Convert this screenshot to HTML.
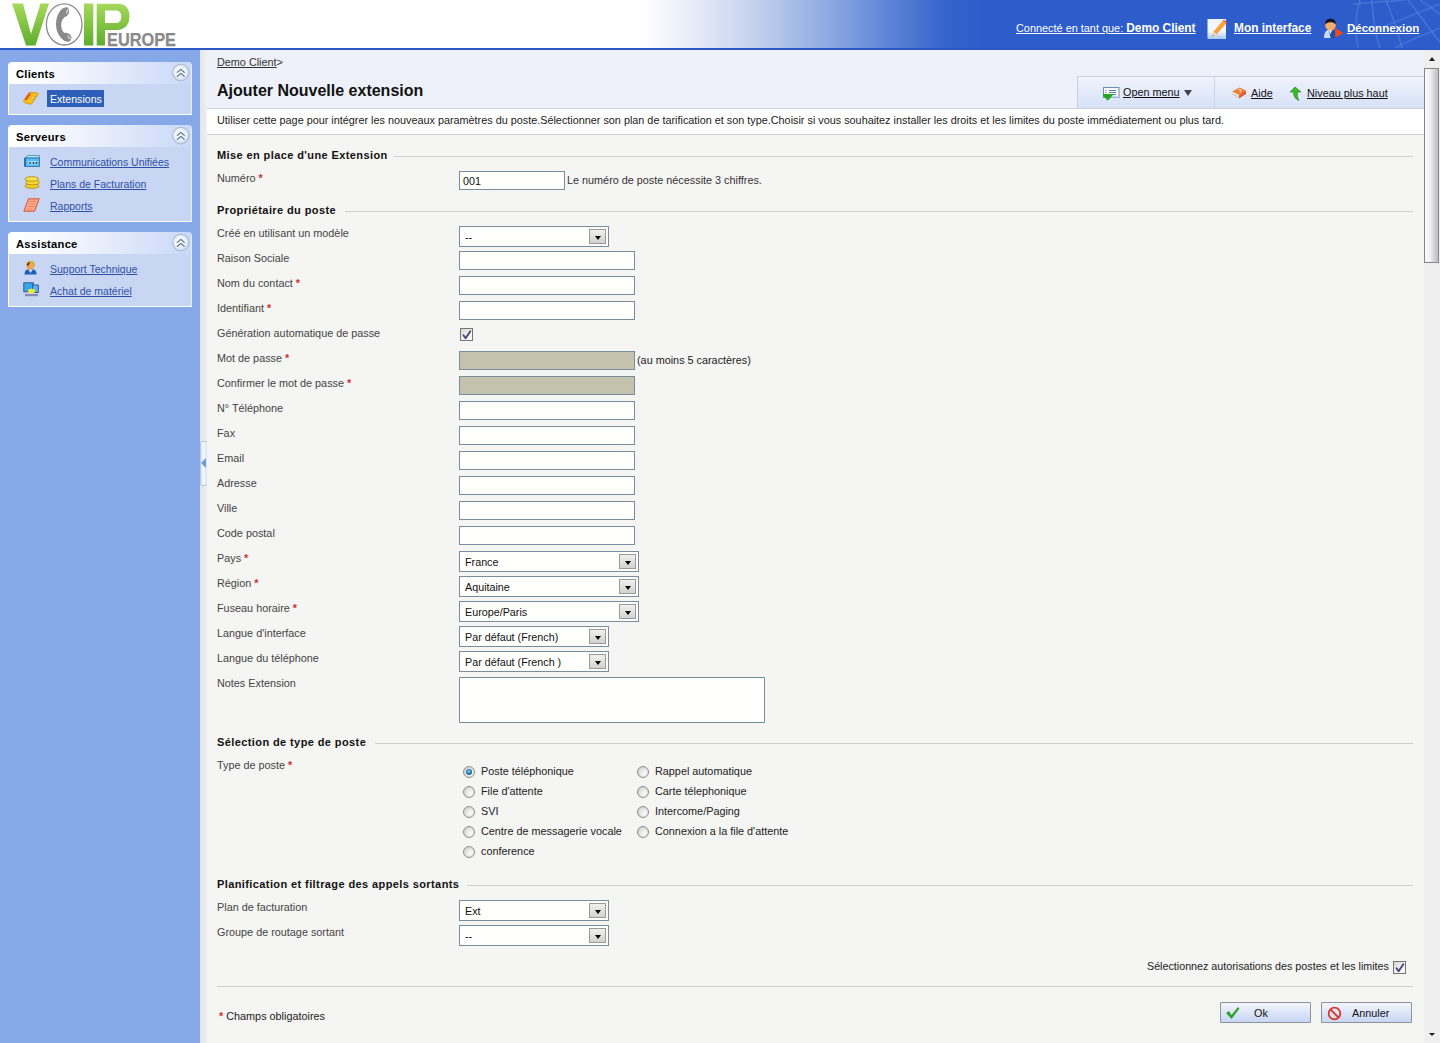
<!DOCTYPE html>
<html><head><meta charset="utf-8">
<style>
*{box-sizing:border-box}
html,body{margin:0;padding:0;width:1440px;height:1043px;overflow:hidden;font-family:"Liberation Sans",sans-serif;font-size:11px;color:#333;position:relative}
.abs{position:absolute}
#hdr{position:absolute;left:0;top:0;width:1440px;height:48px;background:linear-gradient(to right,#fff 0,#fff 643px,#e3e9f7 700px,#c3d1ee 755px,#8eaae2 828px,#5a82d6 892px,#3564cb 945px,#2c5dca 985px,#2c5dca 1440px)}
#hline{position:absolute;left:0;top:48px;width:1440px;height:2px;background:#2c58c9}
#side{position:absolute;left:0;top:50px;width:200px;height:993px;background:#87a8e8}
#split{position:absolute;left:200px;top:50px;width:7px;height:993px;background:linear-gradient(to right,#e3e6ea,#e9ebee 5px,#f2f2f1)}
#main{position:absolute;left:207px;top:50px;width:1217px;height:993px;background:#f5f5f3}
#scroll{position:absolute;left:1424px;top:50px;width:16px;height:993px;background:#efefef}
.t{white-space:nowrap;font-size:10.84px;line-height:13px}
.panel{position:absolute;left:8px;width:184px;background:#c8d6f4;border-left:1px solid #fff;border-bottom:1px solid #fff;border-right:1px solid #e6ecfa;border-radius:4px 4px 0 0}
.ph{position:absolute;left:0;top:0;width:100%;height:22px;background:linear-gradient(to right,#fff 0,#f2f5fd 60px,#c9d9f8 100%);border-radius:4px 4px 0 0;font-weight:bold;color:#000;font-size:11.2px;letter-spacing:0.25px;line-height:13px;padding:6px 0 0 7px}
.chev{position:absolute;right:3px;top:3px;width:17px;height:17px;border-radius:50%;background:radial-gradient(circle at 50% 40%,#fff,#dbe6f8 70%,#b9cdef);border:1px solid #c3d2ee}
.lnk{position:absolute;left:41px;color:#2d50a6;text-decoration:underline;font-size:10.5px;line-height:13px;white-space:nowrap;margin-top:1px}
.ico{position:absolute;left:14px}
.lbl{left:217px;white-space:nowrap;font-size:10.84px;line-height:13px;color:#444}
.req{color:#d03030;font-weight:bold}
.sec{left:217px;white-space:nowrap;font-size:11px;letter-spacing:0.4px;line-height:13px;font-weight:bold;color:#111}
.secl{height:1px;background:#cfcfcd}
.inp{left:459px;height:19px;border:1px solid #7a8d9f;background:#fffffe}
.iv{position:absolute;left:3px;top:3px;font-size:10.75px;line-height:13px;color:#111}
.sel{left:459px;height:21px;border:1px solid #7a8d9f;background:#fffffe}
.sv{position:absolute;left:5px;top:4px;font-size:10.75px;line-height:13px;color:#111;white-space:nowrap}
.dd{position:absolute;right:2px;top:2px;width:17px;height:15px;border:1px solid #9a9a9a;background:linear-gradient(#f0f0ee,#d2d2d0)}
.dd:after{content:"";position:absolute;left:4.5px;top:6px;border-left:3.5px solid transparent;border-right:3.5px solid transparent;border-top:4px solid #000}
.cb{width:13px;height:13px;border:1px solid #747474;background:linear-gradient(135deg,#d6d6d0,#f3f3f1 60%,#fafaf9)}

.rd{width:12px;height:12px;border-radius:50%;border:1px solid #8e8e8c;background:radial-gradient(circle at 65% 65%,#fbfbfa,#e6e6e2 45%,#c4c4c0)}
.rd.on:after{content:"";position:absolute;left:2px;top:2px;width:6px;height:6px;border-radius:50%;background:radial-gradient(circle at 45% 40%,#8fdcf5,#2a7ab0 45%,#123e6a)}
.btn{width:91px;height:21px;border:1px solid #8e9299;border-radius:1px;background:linear-gradient(#f2f5fc,#c8d6f4)}
</style></head><body>
<div id="split"></div>
<div id="main"></div>
<div id="scroll"></div>
<!-- HEADER -->
<div id="hdr">
 <svg class="abs" style="left:1320px;top:0" width="120" height="48" viewBox="0 0 120 48">
  <g fill="none" stroke="#5482dc" stroke-opacity="0.55" stroke-width="1.8">
   <path d="M40 0 C35 15, 35 35, 38 48"/>
   <path d="M52 0 C53 18, 55 35, 60 48"/>
   <path d="M66 0 C72 15, 78 32, 82 48"/>
   <path d="M88 0 C98 12, 108 28, 120 42"/>
   <path d="M33 4 C50 3, 70 1, 85 0"/>
   <path d="M55 30 C75 22, 100 12, 120 4"/>
   <path d="M75 48 C90 40, 105 34, 120 28"/>
   <path d="M100 0 L 120 14"/>
  </g>
 </svg>
 <div class="abs" style="left:1016px;top:22px;color:#fff;font-size:10.9px;line-height:13px;white-space:nowrap;text-decoration:underline">Connecté en tant que: <b style="font-size:11.9px">Demo Client</b></div>
 <svg class="abs" style="left:1207px;top:19px" width="20" height="21" viewBox="0 0 20 21"><defs><linearGradient id="pg" x1="0" y1="0" x2="0" y2="1"><stop offset="0" stop-color="#eef5fe"/><stop offset="0.6" stop-color="#f4f8fd"/><stop offset="1" stop-color="#a9c9f2"/></linearGradient></defs><rect x="0.5" y="0" width="18.5" height="20" fill="url(#pg)"/><path d="M5.5 17 L6.5 12.5 L15.5 2 L19 4.8 L10 15 Z" fill="#f6a43a"/><path d="M15.5 2 L17 0.5 L19.8 3 L19 4.8 Z" fill="#e8703a"/><path d="M6.5 12.5 L10 15 L5.5 17 Z" fill="#f3d9b0"/><path d="M5.5 17 L6.2 15.8 L6.8 16.4 Z" fill="#333"/></svg>
 <div class="abs" style="left:1234px;top:22px;color:#fff;font-weight:bold;font-size:11.9px;line-height:13px;white-space:nowrap;text-decoration:underline">Mon interface</div>
 <svg class="abs" style="left:1322px;top:18px" width="22" height="21" viewBox="0 0 22 21"><path d="M2 20 C2 14.5 4 12 8.5 12 C13 12 15 14.5 15 20 Z" fill="#1d4fae"/><path d="M2 20 C2 14.5 4 12 7 12 L8.5 20 Z" fill="#c8dcf8"/><path d="M7 12 L8.5 16 L10 12 Z" fill="#fff"/><circle cx="8.5" cy="7.2" r="5.3" fill="#f2ad6a"/><path d="M3.2 6.5 C3 2.5 5.5 0.8 8.5 0.8 C11.5 0.8 14 2.5 13.8 6.5 C12.5 4.6 10.5 4.2 8.5 4.2 C6.5 4.2 4.5 4.6 3.2 6.5 Z" fill="#15151f"/><path d="M13.2 10 L21.5 15 L13.2 19.8 Z" fill="#f04a1e"/></svg>
 <div class="abs" style="left:1347px;top:22px;color:#fff;font-weight:bold;font-size:11.5px;line-height:13px;white-space:nowrap;text-decoration:underline">Déconnexion</div>
 <!-- LOGO -->
 <svg class="abs" style="left:0;top:0" width="190" height="48" viewBox="0 0 190 48">
  <defs>
   <linearGradient id="lg" x1="0" y1="0" x2="0" y2="1">
    <stop offset="0" stop-color="#a6d85a"/><stop offset="1" stop-color="#5fae2e"/>
   </linearGradient>
  </defs>
  <path d="M12 3.5 L23 3.5 L31 34 L40.5 3.5 L49 3.5 L35.5 45.5 L26 45.5 Z" fill="url(#lg)"/>
  <ellipse cx="64.2" cy="24.4" rx="17.8" ry="20.6" fill="none" stroke="#8c8c8c" stroke-width="1.3"/>
  <path d="M67 7.2 C68.8 7.5 69.5 10 69 12.5 C68.5 15 66.5 16.8 64.8 17 C62.3 19 61 22 61.2 25.5 C61.4 29 62.5 31.5 64.5 33 C66.5 32.5 69 33.2 70.8 35.5 C72 37.5 71.5 40.5 69.5 41.5 C67 42.5 64 41 61.5 38.5 C58 35 56 30 56 24.5 C56 18 58.5 12 62 9 C63.5 7.8 65.5 7 67 7.2 Z" fill="#8a8a8a"/><ellipse cx="67.3" cy="11" rx="1" ry="3" fill="#c9c9c9" transform="rotate(20 67.3 11)"/><ellipse cx="69" cy="37.5" rx="1" ry="2.6" fill="#c9c9c9" transform="rotate(-35 69 37.5)"/>
  <rect x="84" y="3.5" width="9.3" height="42" fill="url(#lg)"/>
  <path d="M96.7 3.8 L118 3.8 C126 3.8 129.5 9 129.5 16.5 C129.5 25 124 30 117 30 L105 30 L105 45.5 L96.7 45.5 Z M105 10.5 L105 23 L116 23 C119.5 23 121.2 20.5 121.2 16.7 C121.2 13 119.5 10.5 116 10.5 Z" fill="url(#lg)" fill-rule="evenodd"/>
  <text x="107" y="45.5" font-family="Liberation Sans" font-weight="bold" font-size="18.5" fill="#898989" stroke="#898989" stroke-width="0.25" textLength="69" lengthAdjust="spacingAndGlyphs">EUROPE</text>
 </svg>
</div>
<div id="hline"></div>

<!-- SIDEBAR -->
<div id="side">
 <div class="panel" style="top:12px;height:53px">
  <div class="ph">Clients<svg class="abs" style="right:1px;top:1px" width="19" height="19" viewBox="0 0 19 19"><defs><radialGradient id="cg" cx="0.45" cy="0.4" r="0.6"><stop offset="0" stop-color="#fbfdff"/><stop offset="0.7" stop-color="#e3edf9"/><stop offset="1" stop-color="#cad9ef"/></radialGradient></defs><circle cx="9.8" cy="9.6" r="8.2" fill="url(#cg)" stroke="#aebbd0" stroke-width="1.2"/><path d="M6 9.6 L9.8 6.4 L13.6 9.6 M6 13.6 L9.8 10.4 L13.6 13.6" fill="none" stroke="#56626f" stroke-width="1.1"/></svg></div>
  <svg class="abs" style="left:14px;top:30px" width="17" height="13" viewBox="0 0 17 13"><path d="M0.8 8.3 L6 0.8 C6.3 0.4 6.6 0.4 7 0.4 L14.2 1 C15 1.1 15.3 1.8 15 2.4 L8.8 11.6 C8.5 12 8 12.3 7.5 12.2 L1.5 10.6 C0.7 10.3 0.5 9 0.8 8.3 Z" fill="#f5c018" stroke="#d58c0c" stroke-width="0.8"/><path d="M2.5 8 L7 1.5" stroke="#e4432a" stroke-width="2"/><path d="M8.5 4.2 L12 4.5 L10.5 7 L7.3 6.7 Z" fill="#fbe07a" stroke="#b8820e" stroke-width="0.5"/></svg>
  <div class="abs" style="left:38px;top:28px;width:57px;height:17px;background:#2d5fb9"></div>
  <div class="abs" style="left:41px;top:31px;color:#fff;font-size:10.6px;line-height:13px;white-space:nowrap">Extensions</div>
 </div>
 <div class="panel" style="top:75px;height:97px">
  <div class="ph">Serveurs<svg class="abs" style="right:1px;top:1px" width="19" height="19" viewBox="0 0 19 19"><defs><radialGradient id="cg" cx="0.45" cy="0.4" r="0.6"><stop offset="0" stop-color="#fbfdff"/><stop offset="0.7" stop-color="#e3edf9"/><stop offset="1" stop-color="#cad9ef"/></radialGradient></defs><circle cx="9.8" cy="9.6" r="8.2" fill="url(#cg)" stroke="#aebbd0" stroke-width="1.2"/><path d="M6 9.6 L9.8 6.4 L13.6 9.6 M6 13.6 L9.8 10.4 L13.6 13.6" fill="none" stroke="#56626f" stroke-width="1.1"/></svg></div>
  <svg class="abs" style="left:15px;top:30px" width="16" height="12" viewBox="0 0 16 12"><path d="M1 3 L4 0.5 L15.5 0.5 L15.5 3 Z" fill="#c4e8fa" stroke="#2d7db8" stroke-width="0.7"/><rect x="1" y="3" width="14.5" height="8.5" fill="#56bdee" stroke="#1f6aa8" stroke-width="0.8"/><path d="M1 3 L1 11.5" stroke="#1a5a90" stroke-width="1.4"/><rect x="4" y="6" width="10" height="3.5" fill="#9fdcf7"/><circle cx="6" cy="8" r="0.9" fill="#123a66"/><circle cx="9.5" cy="8" r="0.9" fill="#123a66"/><circle cx="12.5" cy="8" r="0.9" fill="#123a66"/></svg>
  <a class="lnk" style="top:30px">Communications Unifiées</a>
  <svg class="abs" style="left:15px;top:51px" width="16" height="13" viewBox="0 0 16 13"><ellipse cx="8" cy="10" rx="7" ry="2.4" fill="#f3cf2a" stroke="#a88708" stroke-width="0.8"/><ellipse cx="8.5" cy="6.5" rx="7" ry="2.4" fill="#f6d83c" stroke="#a88708" stroke-width="0.8"/><ellipse cx="7.8" cy="3" rx="6.8" ry="2.3" fill="#f8e050" stroke="#a88708" stroke-width="0.8"/></svg>
  <a class="lnk" style="top:52px">Plans de Facturation</a>
  <svg class="abs" style="left:14px;top:73px" width="17" height="14" viewBox="0 0 17 14"><path d="M5.5 0.8 L16.2 0.8 L11.5 13.2 L0.8 13.2 Z" fill="#fba98b" stroke="#d2482a" stroke-width="0.9"/><path d="M7 3.5 L13.5 3.5 M6 6 L12.5 6 M5 8.5 L11.5 8.5 M4 11 L9 11" stroke="#e8735a" stroke-width="0.7"/></svg>
  <a class="lnk" style="top:74px">Rapports</a>
 </div>
 <div class="panel" style="top:182px;height:75px">
  <div class="ph">Assistance<svg class="abs" style="right:1px;top:1px" width="19" height="19" viewBox="0 0 19 19"><defs><radialGradient id="cg" cx="0.45" cy="0.4" r="0.6"><stop offset="0" stop-color="#fbfdff"/><stop offset="0.7" stop-color="#e3edf9"/><stop offset="1" stop-color="#cad9ef"/></radialGradient></defs><circle cx="9.8" cy="9.6" r="8.2" fill="url(#cg)" stroke="#aebbd0" stroke-width="1.2"/><path d="M6 9.6 L9.8 6.4 L13.6 9.6 M6 13.6 L9.8 10.4 L13.6 13.6" fill="none" stroke="#56626f" stroke-width="1.1"/></svg></div>
  <svg class="abs" style="left:15px;top:29px" width="13" height="14" viewBox="0 0 13 14"><path d="M0.5 13.5 C0.5 9.5 2.5 8 6.5 8 C10.5 8 12.5 9.5 12.5 13.5 Z" fill="#1d5fb8"/><path d="M4 8.3 L6.5 12 L9 8.3 Z" fill="#cfe4fb"/><circle cx="6.5" cy="4.8" r="3.9" fill="#f2a45a"/><path d="M2.6 4.8 C2.6 1.3 5 0.5 6.5 0.5 C8.5 0.5 10.4 1.8 10.4 4.8" fill="none" stroke="#d8b020" stroke-width="1.3"/><path d="M3 3.5 C3.5 1.8 5 1.2 6 1.3 L4 5.5 Z" fill="#3a2a1a"/></svg>
  <a class="lnk" style="top:30px">Support Technique</a>
  <svg class="abs" style="left:14px;top:50px" width="16" height="15" viewBox="0 0 16 15"><rect x="0.8" y="0.8" width="9.5" height="9" fill="#34a8ea" stroke="#2c4f8a" stroke-width="0.9"/><rect x="9.5" y="3" width="5.8" height="7.5" fill="#5ab4ee" stroke="#2c4f8a" stroke-width="0.9"/><ellipse cx="8.5" cy="9" rx="3.5" ry="2.3" fill="#f6ea2a"/><rect x="2" y="12" width="13" height="2.2" fill="#8a87b8"/></svg>
  <a class="lnk" style="top:52px">Achat de matériel</a>
 </div>
</div>
<div class="abs" style="left:207px;top:50px;width:1217px;height:58px;background:#eef1f9"></div>
<div class="abs" style="left:207px;top:108px;width:1217px;height:27px;background:#fff;border-top:1px solid #cdd0d6;border-bottom:1px solid #cbcbcb"></div>
<div class="abs t" style="left:217px;top:56px;color:#333"><span style="text-decoration:underline">Demo Client</span>&gt;</div>
<div class="abs" style="left:217px;top:81px;font-size:16px;font-weight:bold;color:#111;line-height:19px;white-space:nowrap">Ajouter Nouvelle extension</div>
<div class="abs" style="left:1077px;top:76px;width:347px;height:32px;background:linear-gradient(#f1f3fb,#d6e1f8);border-left:1px solid #c9d1e3;border-top:1px solid #c9d1e3"></div>
<div class="abs" style="left:1214px;top:77px;width:1px;height:31px;background:#cbd3e4"></div>
<svg class="abs" style="left:1102px;top:86px" width="18" height="16" viewBox="0 0 18 16"><rect x="1.5" y="1.5" width="15.5" height="10" fill="#f6f8fd" stroke="#6f8fae" stroke-width="1"/><rect x="3" y="10" width="14" height="1.5" fill="#c9d6f4"/><rect x="7" y="4" width="7" height="1" fill="#5b7fa8"/><rect x="7" y="6" width="7" height="1" fill="#5b7fa8"/><rect x="7" y="8" width="7" height="1" fill="#5b7fa8"/><rect x="3.5" y="4" width="1" height="1" fill="#667"/><rect x="3.5" y="6" width="1" height="1" fill="#667"/><path d="M1 8 L10.5 8 L10.5 9.5 L5.8 14.8 L1 9.5 Z" fill="#22a81c"/></svg>
<div class="abs t" style="left:1123px;top:86px;color:#111;text-decoration:underline">Open menu</div>
<div class="abs" style="left:1184px;top:90px;width:0;height:0;border-left:4px solid transparent;border-right:4px solid transparent;border-top:6px solid #404448"></div>
<svg class="abs" style="left:1231px;top:86px" width="16" height="14" viewBox="0 0 16 14"><path d="M1 5.5 L8.5 1.5 L15 4.5 L8 9 Z" fill="#f27b35"/><path d="M1 5.5 L8 9 L8 12.5 L1 9 Z" fill="#e9e4df"/><path d="M8 9 L15 4.5 L15 8 L8 12.5 Z" fill="#d8602a"/><path d="M1.5 8.2 L8 11.6" stroke="#b0a8a0" stroke-width="0.6"/><path d="M7.5 3.2 L10 4.2 L9 6.2" fill="none" stroke="#fde2cf" stroke-width="1.1"/></svg>
<div class="abs t" style="left:1251px;top:87px;color:#111;text-decoration:underline">Aide</div>
<svg class="abs" style="left:1289px;top:86px" width="13" height="15" viewBox="0 0 13 15"><path d="M6 1 L12 6 L8.5 6 C8 9 8.5 12 10 14.5 C6 13 4.5 10 4.5 6 L1 6 Z" fill="#3cba2c" stroke="#1f7a14" stroke-width="0.6"/></svg>
<div class="abs t" style="left:1307px;top:87px;color:#111;text-decoration:underline">Niveau plus haut</div>
<div class="abs t" style="left:217px;top:114px;color:#222;">Utiliser cette page pour intégrer les nouveaux paramètres du poste.Sélectionner son plan de tarification et son type.Choisir si vous souhaitez installer les droits et les limites du poste immédiatement ou plus tard.</div>
<div class="abs sec" style="top:149px">Mise en place d'une Extension</div>
<div class="abs secl" style="left:394px;top:156px;width:1019px"></div>
<div class="abs lbl" style="top:172px">Numéro <span class="req">*</span></div>
<div class="abs inp" style="top:171px;width:106px"><span class="iv">001</span></div>
<div class="abs t" style="left:567px;top:174px;color:#333">Le numéro de poste nécessite 3 chiffres.</div>
<div class="abs sec" style="top:204px">Propriétaire du poste</div>
<div class="abs secl" style="left:345px;top:211px;width:1068px"></div>
<div class="abs lbl" style="top:227px">Créé en utilisant un modèle</div>
<div class="abs sel" style="top:226px;width:150px"><span class="sv">--</span><div class="dd"></div></div>
<div class="abs lbl" style="top:252px">Raison Sociale</div>
<div class="abs inp" style="top:251px;width:176px"></div>
<div class="abs lbl" style="top:277px">Nom du contact <span class="req">*</span></div>
<div class="abs inp" style="top:276px;width:176px"></div>
<div class="abs lbl" style="top:302px">Identifiant <span class="req">*</span></div>
<div class="abs inp" style="top:301px;width:176px"></div>
<div class="abs lbl" style="top:327px">Génération automatique de passe</div>
<div class="abs cb" style="left:460px;top:328px"><svg class="abs" style="left:0;top:0" width="11" height="11" viewBox="0 0 11 11"><path d="M2.5 6.3 L4.6 9.2 L9.3 2.3" fill="none" stroke="#3f4880" stroke-width="1.9" stroke-linecap="round" stroke-linejoin="round"/></svg></div>
<div class="abs lbl" style="top:352px">Mot de passe <span class="req">*</span></div>
<div class="abs inp" style="top:351px;width:176px;background:#c5c2ad"></div>
<div class="abs t" style="left:637px;top:354px;color:#222">(au moins 5 caractères)</div>
<div class="abs lbl" style="top:377px">Confirmer le mot de passe <span class="req">*</span></div>
<div class="abs inp" style="top:376px;width:176px;background:#c5c2ad"></div>
<div class="abs lbl" style="top:402px">N° Téléphone</div>
<div class="abs inp" style="top:401px;width:176px"></div>
<div class="abs lbl" style="top:427px">Fax</div>
<div class="abs inp" style="top:426px;width:176px"></div>
<div class="abs lbl" style="top:452px">Email</div>
<div class="abs inp" style="top:451px;width:176px"></div>
<div class="abs lbl" style="top:477px">Adresse</div>
<div class="abs inp" style="top:476px;width:176px"></div>
<div class="abs lbl" style="top:502px">Ville</div>
<div class="abs inp" style="top:501px;width:176px"></div>
<div class="abs lbl" style="top:527px">Code postal</div>
<div class="abs inp" style="top:526px;width:176px"></div>
<div class="abs lbl" style="top:552px">Pays <span class="req">*</span></div>
<div class="abs sel" style="top:551px;width:180px"><span class="sv">France</span><div class="dd"></div></div>
<div class="abs lbl" style="top:577px">Région <span class="req">*</span></div>
<div class="abs sel" style="top:576px;width:180px"><span class="sv">Aquitaine</span><div class="dd"></div></div>
<div class="abs lbl" style="top:602px">Fuseau horaire <span class="req">*</span></div>
<div class="abs sel" style="top:601px;width:180px"><span class="sv">Europe/Paris</span><div class="dd"></div></div>
<div class="abs lbl" style="top:627px">Langue d'interface</div>
<div class="abs sel" style="top:626px;width:150px"><span class="sv">Par défaut (French)</span><div class="dd"></div></div>
<div class="abs lbl" style="top:652px">Langue du téléphone</div>
<div class="abs sel" style="top:651px;width:150px"><span class="sv">Par défaut (French )</span><div class="dd"></div></div>
<div class="abs lbl" style="top:677px">Notes Extension</div>
<div class="abs inp" style="top:677px;width:306px;height:46px"></div>
<div class="abs sec" style="top:736px">Sélection de type de poste</div>
<div class="abs secl" style="left:375px;top:743px;width:1038px"></div>
<div class="abs lbl" style="top:759px">Type de poste <span class="req">*</span></div>
<div class="abs rd on" style="left:463px;top:766px"></div>
<div class="abs t" style="left:481px;top:765px;color:#222">Poste téléphonique</div>
<div class="abs rd" style="left:463px;top:786px"></div>
<div class="abs t" style="left:481px;top:785px;color:#222">File d'attente</div>
<div class="abs rd" style="left:463px;top:806px"></div>
<div class="abs t" style="left:481px;top:805px;color:#222">SVI</div>
<div class="abs rd" style="left:463px;top:826px"></div>
<div class="abs t" style="left:481px;top:825px;color:#222">Centre de messagerie vocale</div>
<div class="abs rd" style="left:463px;top:846px"></div>
<div class="abs t" style="left:481px;top:845px;color:#222">conference</div>
<div class="abs rd" style="left:637px;top:766px"></div>
<div class="abs t" style="left:655px;top:765px;color:#222">Rappel automatique</div>
<div class="abs rd" style="left:637px;top:786px"></div>
<div class="abs t" style="left:655px;top:785px;color:#222">Carte télephonique</div>
<div class="abs rd" style="left:637px;top:806px"></div>
<div class="abs t" style="left:655px;top:805px;color:#222">Intercome/Paging</div>
<div class="abs rd" style="left:637px;top:826px"></div>
<div class="abs t" style="left:655px;top:825px;color:#222">Connexion a la file d'attente</div>
<div class="abs sec" style="top:878px">Planification et filtrage des appels sortants</div>
<div class="abs secl" style="left:467px;top:885px;width:946px"></div>
<div class="abs lbl" style="top:901px">Plan de facturation</div>
<div class="abs sel" style="top:900px;width:150px"><span class="sv">Ext</span><div class="dd"></div></div>
<div class="abs lbl" style="top:926px">Groupe de routage sortant</div>
<div class="abs sel" style="top:925px;width:150px"><span class="sv">--</span><div class="dd"></div></div>
<div class="abs t" style="left:1147px;top:960px;color:#222;font-size:10.72px">Sélectionnez autorisations des postes et les limites</div>
<div class="abs cb" style="left:1393px;top:961px"><svg class="abs" style="left:0;top:0" width="11" height="11" viewBox="0 0 11 11"><path d="M2.5 6.3 L4.6 9.2 L9.3 2.3" fill="none" stroke="#3f4880" stroke-width="1.9" stroke-linecap="round" stroke-linejoin="round"/></svg></div>
<div class="abs secl" style="left:217px;top:986px;width:1196px"></div>
<div class="abs t" style="left:219px;top:1010px;color:#222"><span class="req">*</span> Champs obligatoires</div>
<div class="abs btn" style="left:1220px;top:1002px"><svg class="abs" style="left:4px;top:3px" width="15" height="14" viewBox="0 0 15 14"><path d="M1 7 L4 5 L6.5 9 L13 1 L14.5 2.5 L6.5 13 Z" fill="#33a02c"/></svg><span class="abs t" style="left:33px;top:4px;color:#111">Ok</span></div>
<div class="abs btn" style="left:1321px;top:1002px"><svg class="abs" style="left:5px;top:3px" width="15" height="15" viewBox="0 0 15 15"><circle cx="7.5" cy="7.5" r="5.8" fill="none" stroke="#d83a2a" stroke-width="1.8"/><path d="M3.5 3.5 L11.5 11.5" stroke="#d83a2a" stroke-width="1.8"/></svg><span class="abs t" style="left:30px;top:4px;color:#111">Annuler</span></div>
<div class="abs" style="left:200px;top:441px;width:7px;height:45px;background:linear-gradient(to right,#dfe8f5,#f4f8fd 3px,#cfe3ef);border-radius:3px 0 0 3px;border:1px solid #bac9de;border-right:none"></div>
<div class="abs" style="left:201px;top:458px;width:0;height:0;border-top:5px solid transparent;border-bottom:5px solid transparent;border-right:5px solid #6b9cd0"></div>
<div class="abs" style="left:1429px;top:57px;width:0;height:0;border-left:3.5px solid transparent;border-right:3.5px solid transparent;border-bottom:4px solid #222"></div>
<div class="abs" style="left:1424px;top:68px;width:15px;height:195px;border:1px solid #858585;background:linear-gradient(to right,#fafafa 10%,#ececee 45%,#d8d8da 65%,#c4c4c8 90%)"></div>
<div class="abs" style="left:1429px;top:1033px;width:0;height:0;border-left:3.5px solid transparent;border-right:3.5px solid transparent;border-top:3.5px solid #1a1a1a"></div></body></html>
